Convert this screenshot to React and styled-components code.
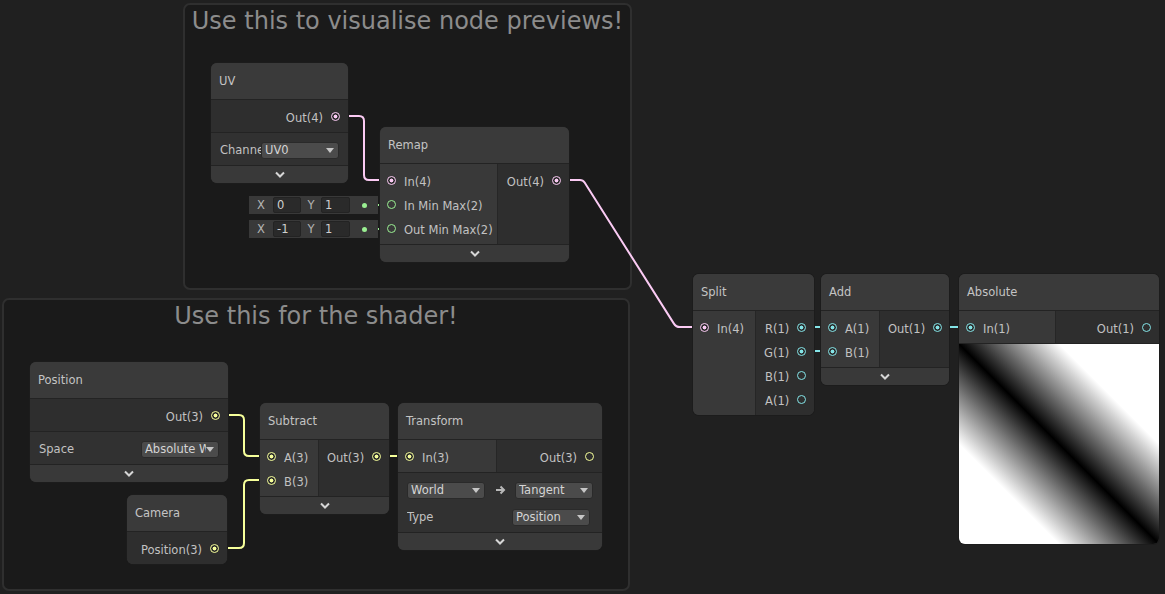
import styled, { createGlobalStyle } from 'styled-components';

const COLORS = { v1: '#84e4e7', v2: '#9aef92', v3: '#f6ff9a', v4: '#fbcbf4' };
const DIM = { v1: '#4a6b6c', v2: '#566d53', v3: '#6e7150', v4: '#6f5f6c' };

const GlobalStyle = createGlobalStyle`
  body {
    margin: 0;
    background: #202020;
  }
`;

const Canvas = styled.div`
  position: relative;
  width: 1165px;
  height: 594px;
  overflow: hidden;
  background: #202020;
  font-family: 'DejaVu Sans', Verdana, sans-serif;
`;

const GroupBox = styled.div`
  position: absolute;
  left: ${({ $x }) => $x}px;
  top: ${({ $y }) => $y}px;
  width: ${({ $w }) => $w}px;
  height: ${({ $h }) => $h}px;
  box-sizing: border-box;
  background: #1a1a1a;
  border: 2px solid #2f2f2f;
  border-radius: 7px;
`;

const GroupTitle = styled.div`
  padding-top: 2px;
  text-align: center;
  font-size: 24px;
  line-height: 28px;
  color: #8c8c8c;
  white-space: nowrap;
`;

const Group = ({ x, y, w, h, title }) => (
  <GroupBox $x={x} $y={y} $w={w} $h={h}>
    <GroupTitle>{title}</GroupTitle>
  </GroupBox>
);

const Wires = styled.svg`
  position: absolute;
  left: 0;
  top: 0;
  pointer-events: none;
`;

const NodeBox = styled.div`
  position: absolute;
  left: ${({ $x }) => $x}px;
  top: ${({ $y }) => $y}px;
  width: ${({ $w }) => $w}px;
`;

const NodeBody = styled.div`
  display: flex;
  flex-direction: column;
  border-radius: 6px;
  overflow: hidden;
  background: #393939;
  box-shadow: 0 0 0 1px #1c1c1c;
`;

const Header = styled.div`
  height: 36px;
  display: flex;
  align-items: center;
  padding-left: 8px;
  border-bottom: 1px solid #232323;
  background: #3a3a3a;
  color: #c4c4c4;
  font-size: 11.5px;
`;

const Ports = styled.div`
  display: flex;
  align-items: stretch;
`;

const InCol = styled.div`
  width: ${({ $w }) => $w}px;
  flex-shrink: 0;
  padding: 4px 0;
  background: #393939;
`;

const OutCol = styled.div`
  flex: 1;
  padding: 4px 0;
  background: #2e2e2e;
  border-left: ${({ $split }) => ($split ? '1px solid #262626' : 'none')};
`;

const PortRow = styled.div`
  height: 24px;
  display: flex;
  align-items: center;
  justify-content: ${({ $out }) => ($out ? 'flex-end' : 'flex-start')};
  gap: 8px;
  padding: ${({ $out }) => ($out ? '0 8px' : '0 6px 0 7px')};
  color: #c2c2c2;
  font-size: 11.5px;
  white-space: nowrap;
`;

const PortText = styled.span`
  padding-top: 3px;
`;

const Port = styled.span`
  width: 9px;
  height: 9px;
  box-sizing: border-box;
  flex-shrink: 0;
  border-radius: 50%;
  border: 1.5px solid ${({ $c }) => $c};
  background: ${({ $c, $on }) =>
    $on ? `radial-gradient(circle, ${$c} 0 1.7px, #2b2b2b 2.2px)` : 'transparent'};
`;

const Controls = styled.div`
  display: flex;
  flex-direction: column;
  gap: 7px;
  padding: 7px 9px 5px;
  border-top: 1px solid #232323;
  background: #313131;
`;

const ControlRow = styled.div`
  height: 20px;
  display: flex;
  align-items: center;
  justify-content: space-between;
  padding-right: ${({ $inset }) => $inset || 0}px;
`;

const Label = styled.span`
  flex: 1;
  min-width: 0;
  overflow: hidden;
  white-space: nowrap;
  color: #c2c2c2;
  font-size: 11.5px;
`;

const DropBox = styled.div`
  width: 78px;
  height: 17px;
  flex-shrink: 0;
  box-sizing: border-box;
  display: flex;
  align-items: center;
  padding: 0 4px 0 3px;
  background: #4b4b4b;
  border: 1px solid #2a2a2a;
  border-radius: 3px;
  color: #d4d4d4;
  font-size: 11.5px;
`;

const DropValue = styled.span`
  flex: 1;
  overflow: hidden;
  white-space: nowrap;
`;

const Dropdown = ({ value }) => (
  <DropBox>
    <DropValue>{value}</DropValue>
    <svg width="8" height="5" viewBox="0 0 8 5">
      <path d="M0 0 H8 L4 5 Z" fill="#c6c6c6" />
    </svg>
  </DropBox>
);

const Arrow = () => (
  <svg width="11" height="10" viewBox="0 0 11 10">
    <path d="M1 5 H9 M5.5 1.5 L9 5 L5.5 8.5" stroke="#b8b8b8" strokeWidth="2" fill="none" />
  </svg>
);

const Footer = styled.div`
  height: 17px;
  display: flex;
  align-items: center;
  justify-content: center;
  border-top: 1px solid #232323;
  background: #393939;
`;

const Chevron = () => (
  <svg width="12" height="8" viewBox="0 0 12 8">
    <path d="M2 1.5 L6 5.5 L10 1.5" stroke="#d6d6d6" strokeWidth="2" fill="none" />
  </svg>
);

const Preview = styled.div`
  height: 200px;
  border-top: 1px solid #232323;
  background: linear-gradient(to top right, #fff 25%, #000 50%, #fff 75%);
`;

const InlineValue = styled.div`
  position: absolute;
  right: calc(100% + 2px);
  top: ${({ $row }) => 41 + $row * 24 + 4}px;
  width: 129px;
  height: 18px;
  display: flex;
  align-items: center;
  background: #393939;
  color: #b4b4b4;
  font-size: 11.5px;
`;

const Axis = styled.span`
  width: ${({ $w }) => $w}px;
  text-align: center;
`;

const Field = styled.span`
  width: ${({ $w }) => $w}px;
  height: 16px;
  box-sizing: border-box;
  padding-left: 3px;
  line-height: 14px;
  background: #2a2a2a;
  border: 1px solid #232323;
  border-radius: 2px;
  color: #d0d0d0;
`;

const ValueDot = styled.span`
  width: 5px;
  height: 5px;
  margin-left: auto;
  margin-right: 11px;
  border-radius: 50%;
  background: ${COLORS.v2};
`;

const Node = ({ x, y, w, title, inWidth, inputs = [], outputs = [], controls, footer, preview }) => (
  <NodeBox $x={x} $y={y} $w={w}>
    <NodeBody>
      <Header>{title}</Header>
      <Ports>
        {inputs.length > 0 && (
          <InCol $w={inWidth}>
            {inputs.map(p => (
              <PortRow key={p.label}>
                <Port $c={COLORS[p.kind]} $on={p.on} />
                <PortText>{p.label}</PortText>
              </PortRow>
            ))}
          </InCol>
        )}
        <OutCol $split={inputs.length > 0}>
          {outputs.map(p => (
            <PortRow key={p.label} $out>
              <PortText>{p.label}</PortText>
              <Port $c={COLORS[p.kind]} $on={p.on} />
            </PortRow>
          ))}
        </OutCol>
      </Ports>
      {controls && <Controls>{controls}</Controls>}
      {preview && <Preview />}
      {footer && (
        <Footer>
          <Chevron />
        </Footer>
      )}
    </NodeBody>
    {inputs.map(
      (p, i) =>
        p.value && (
          <InlineValue key={p.label} $row={i}>
            <Axis $w={24}>X</Axis>
            <Field $w={28}>{p.value[0]}</Field>
            <Axis $w={20}>Y</Axis>
            <Field $w={29}>{p.value[1]}</Field>
            <ValueDot />
          </InlineValue>
        )
    )}
  </NodeBox>
);

const wire = (x1, y1, x2, y2, xm, r = 5) => {
  const s = y2 > y1 ? 1 : -1;
  return `M${x1},${y1} H${xm - r} Q${xm},${y1} ${xm},${y1 + s * r} V${y2 - s * r} Q${xm},${y2} ${xm + r},${y2} H${x2}`;
};

const edges = [
  { kind: 'v4', from: [335.5, 116], to: [391.5, 180], d: wire(335.5, 116, 391.5, 180, 364) },
  {
    kind: 'v4',
    from: [556.5, 180],
    to: [704.5, 327],
    d: 'M556.5,180 H580 Q583,180 584.6,182.5 L673.9,323.6 Q676,327 680,327 H704.5',
  },
  { kind: 'v2', from: [365, 205], to: [391.5, 205], d: 'M365,205 H391.5', dot: true },
  { kind: 'v2', from: [365, 229], to: [391.5, 229], d: 'M365,229 H391.5', dot: true },
  { kind: 'v1', from: [801.5, 327], to: [832.5, 327], d: 'M801.5,327 H832.5' },
  { kind: 'v1', from: [801.5, 351], to: [832.5, 351], d: 'M801.5,351 H832.5' },
  { kind: 'v1', from: [936.5, 327], to: [970.5, 327], d: 'M936.5,327 H970.5' },
  { kind: 'v3', from: [215.5, 415], to: [271.5, 456], d: wire(215.5, 415, 271.5, 456, 244) },
  { kind: 'v3', from: [214.5, 548], to: [271.5, 480], d: wire(214.5, 548, 271.5, 480, 244) },
  { kind: 'v3', from: [376.5, 456], to: [409.5, 456], d: 'M376.5,456 H409.5' },
];

const Edge = ({ kind, from, to, d, dot }) => (
  <g>
    <path d={d} stroke={COLORS[kind]} strokeWidth="2" fill="none" />
    {!dot && (
      <line x1={from[0] + 4} y1={from[1]} x2={from[0] + 11} y2={from[1]} stroke={DIM[kind]} strokeWidth="2" />
    )}
    <line x1={to[0] - 11} y1={to[1]} x2={to[0] - 4} y2={to[1]} stroke={DIM[kind]} strokeWidth="2" />
  </g>
);

export default function App() {
  return (
    <>
      <GlobalStyle />
      <Canvas>
        <Group x={183} y={3} w={449} h={287} title="Use this to visualise node previews!" />
        <Group x={2} y={298} w={628} h={293} title="Use this for the shader!" />

        <Wires width="1165" height="594">
          {edges.map((e, i) => (
            <Edge key={i} {...e} />
          ))}
        </Wires>

        <Node
          x={211}
          y={63}
          w={137}
          title="UV"
          outputs={[{ label: 'Out(4)', kind: 'v4', on: true }]}
          controls={
            <ControlRow>
              <Label>Channel</Label>
              <Dropdown value="UV0" />
            </ControlRow>
          }
          footer
        />

        <Node
          x={380}
          y={127}
          w={189}
          title="Remap"
          inWidth={117}
          inputs={[
            { label: 'In(4)', kind: 'v4', on: true },
            { label: 'In Min Max(2)', kind: 'v2', value: ['0', '1'] },
            { label: 'Out Min Max(2)', kind: 'v2', value: ['-1', '1'] },
          ]}
          outputs={[{ label: 'Out(4)', kind: 'v4', on: true }]}
          footer
        />

        <Node
          x={693}
          y={274}
          w={121}
          title="Split"
          inWidth={62}
          inputs={[{ label: 'In(4)', kind: 'v4', on: true }]}
          outputs={[
            { label: 'R(1)', kind: 'v1', on: true },
            { label: 'G(1)', kind: 'v1', on: true },
            { label: 'B(1)', kind: 'v1' },
            { label: 'A(1)', kind: 'v1' },
          ]}
        />

        <Node
          x={821}
          y={274}
          w={128}
          title="Add"
          inWidth={58}
          inputs={[
            { label: 'A(1)', kind: 'v1', on: true },
            { label: 'B(1)', kind: 'v1', on: true },
          ]}
          outputs={[{ label: 'Out(1)', kind: 'v1', on: true }]}
          footer
        />

        <Node
          x={959}
          y={274}
          w={200}
          title="Absolute"
          inWidth={96}
          inputs={[{ label: 'In(1)', kind: 'v1', on: true }]}
          outputs={[{ label: 'Out(1)', kind: 'v1' }]}
          preview
        />

        <Node
          x={30}
          y={362}
          w={198}
          title="Position"
          outputs={[{ label: 'Out(3)', kind: 'v3', on: true }]}
          controls={
            <ControlRow>
              <Label>Space</Label>
              <Dropdown value="Absolute World" />
            </ControlRow>
          }
          footer
        />

        <Node
          x={127}
          y={495}
          w={100}
          title="Camera"
          outputs={[{ label: 'Position(3)', kind: 'v3', on: true }]}
        />

        <Node
          x={260}
          y={403}
          w={129}
          title="Subtract"
          inWidth={58}
          inputs={[
            { label: 'A(3)', kind: 'v3', on: true },
            { label: 'B(3)', kind: 'v3', on: true },
          ]}
          outputs={[{ label: 'Out(3)', kind: 'v3', on: true }]}
          footer
        />

        <Node
          x={398}
          y={403}
          w={204}
          title="Transform"
          inWidth={98}
          inputs={[{ label: 'In(3)', kind: 'v3', on: true }]}
          outputs={[{ label: 'Out(3)', kind: 'v3' }]}
          controls={
            <>
              <ControlRow>
                <Dropdown value="World" />
                <Arrow />
                <Dropdown value="Tangent" />
              </ControlRow>
              <ControlRow $inset={3}>
                <Label>Type</Label>
                <Dropdown value="Position" />
              </ControlRow>
            </>
          }
          footer
        />
      </Canvas>
    </>
  );
}
